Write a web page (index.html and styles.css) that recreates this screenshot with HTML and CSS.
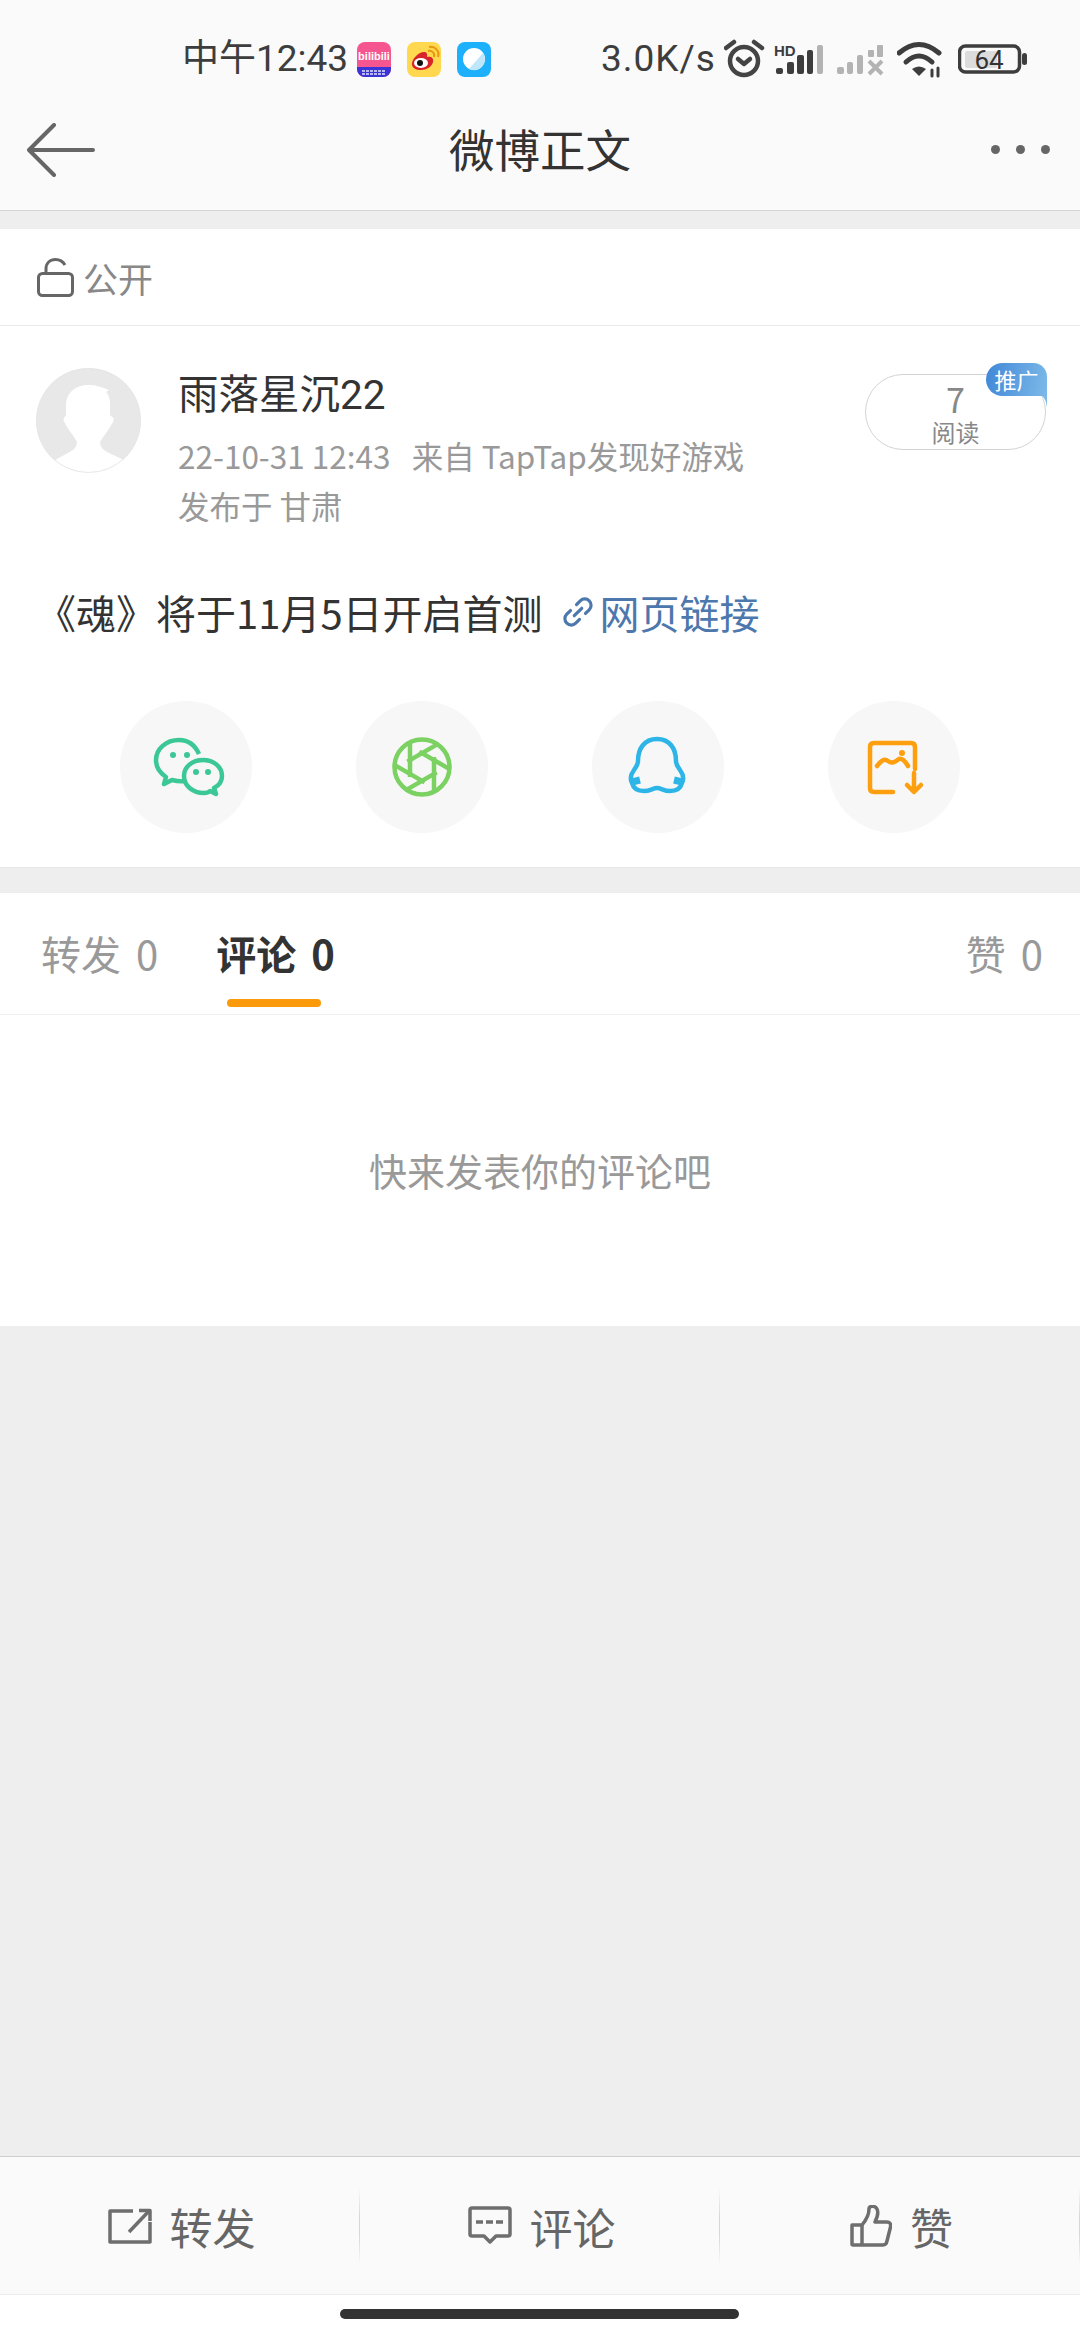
FILE: index.html
```html
<!DOCTYPE html>
<html lang="zh-CN">
<head>
    <meta charset="UTF-8">
    <meta name="viewport" content="width=device-width, initial-scale=1.0">
    <title>微博正文</title>
    <link rel="stylesheet" href="styles.css">
</head>
<body>
    <div class="page">
        <header class="top">
            <div class="status">
                <span class="time">中午12:43</span>
                <div class="apps">
                    <svg class="app" viewBox="0 0 34 35">
                        <rect width="34" height="35" rx="8" fill="#f5568f"/>
                        <path d="M0 25H34V27A8 8 0 0 1 26 35H8A8 8 0 0 1 0 27Z" fill="#3a33d6"/>
                        <text class="app-text" x="17" y="18" text-anchor="middle">bilibili</text>
                        <path d="M5 29H29M5 32H29" stroke="#b9b6f5" stroke-width="2" stroke-dasharray="3 1"/>
                    </svg>
                    <svg class="app" viewBox="0 0 34 35">
                        <rect width="34" height="35" rx="8" fill="#ffd84f"/>
                        <path d="M5 22C5 16 13 9 18 10C21 11 20 14 20 15C24 14 27 16 26 20C25 25 19 28 14 28C9 28 5 26 5 22Z" fill="#d8232a"/>
                        <ellipse cx="14" cy="21" rx="7" ry="5" fill="#fff"/>
                        <circle cx="13" cy="21" r="3" fill="#111"/>
                        <path d="M21 9C25 8 28 11 27 15M22 5C28 4 33 9 31 15" fill="none" stroke="#e8960e" stroke-width="2"/>
                    </svg>
                    <svg class="app" viewBox="0 0 34 35">
                        <rect width="34" height="35" rx="8" fill="#1fb0fb"/>
                        <circle cx="17" cy="17" r="11" fill="#fff"/>
                        <path d="M26 11A11 11 0 0 1 12 27Z" fill="#bfe6fb"/>
                    </svg>
                </div>
                <div class="sys">
                    <span class="speed">3.0K/s</span>
                    <svg class="alarm" viewBox="0 0 41 40" fill="none" stroke="#444" stroke-width="4.5" stroke-linecap="round" stroke-linejoin="round">
                        <circle cx="20" cy="22" r="14"/>
                        <path d="M2 9L10 3M38 9L30 3"/>
                        <path d="M14 20L20 25L26 20"/>
                    </svg>
                    <svg class="hd" viewBox="0 0 55 40">
                        <text class="hd-text" x="1" y="17">HD</text>
                        <rect x="3" y="29" width="7" height="6" rx="2" fill="#3d3d3d"/>
                        <rect x="14" y="23" width="7" height="12" rx="2" fill="#3d3d3d"/>
                        <rect x="24" y="16" width="7" height="19" rx="2" fill="#3d3d3d"/>
                        <rect x="34" y="11" width="6" height="24" rx="2" fill="#3d3d3d"/>
                        <rect x="44" y="6" width="6" height="29" rx="2" fill="#b3b3b3"/>
                    </svg>
                    <svg class="sig" viewBox="0 0 53 40" fill="#b3b3b3">
                        <rect x="1" y="28" width="7" height="7" rx="2"/>
                        <rect x="11" y="23" width="6" height="12" rx="2"/>
                        <rect x="21" y="16" width="6" height="19" rx="2"/>
                        <rect x="32" y="11" width="6" height="7" rx="1"/>
                        <rect x="41" y="6" width="6" height="12" rx="1"/>
                        <path d="M33 22L46 35M46 22L33 35" stroke="#b3b3b3" stroke-width="4" fill="none"/>
                    </svg>
                    <svg class="wifi" viewBox="0 0 53 40" fill="none" stroke="#3d3d3d" stroke-linecap="round">
                        <path d="M2 14Q22 -3 42 14" stroke-width="5"/>
                        <path d="M9 23Q22 11 35 23" stroke-width="5"/>
                        <path d="M15 30Q22 25 29 30L22 37Z" fill="#3d3d3d" stroke="none"/>
                        <path d="M35 31V37M41 29V37" stroke-width="3"/>
                    </svg>
                    <svg class="batt" viewBox="0 0 69 40">
                        <rect x="1.5" y="7" width="60" height="26" rx="6" fill="none" stroke="#3d3d3d" stroke-width="3.5"/>
                        <rect x="7" y="12" width="32" height="17" rx="2" fill="#dcdcdc"/>
                        <rect x="64" y="14" width="5" height="12" rx="2.5" fill="#3d3d3d"/>
                        <text class="batt-text" x="31" y="30" text-anchor="middle">64</text>
                    </svg>
                </div>
            </div>
            <div class="navbar">
                <svg class="back" viewBox="0 0 68 54" fill="none" stroke="#666" stroke-width="4" stroke-linecap="round" stroke-linejoin="round">
                    <path d="M27 2L2 27L27 52M2 27H66"/>
                </svg>
                <h1 class="title">微博正文</h1>
                <div class="dots"><i></i><i></i><i></i></div>
            </div>
        </header>

        <section class="card post">
            <div class="scope">
                <svg class="lock" viewBox="0 0 37 39" fill="none" stroke="#666" stroke-width="3">
                    <rect x="1.5" y="15.5" width="34" height="22" rx="4"/>
                    <path d="M9 15V11C9 5 13 1.5 18.5 1.5C23 1.5 26 3.5 28 7"/>
                </svg>
                <span>公开</span>
            </div>
            <div class="author">
                <svg class="avatar" viewBox="0 0 105 105">
                    <rect width="105" height="105" fill="#e8e8e8"/>
                    <path d="M53 17C40 17 30 24 30 38L30 48C27 49 27 53 29 55C32 62 37 66 41 74C41 80 36 83 30 86L19 92L19 105L88 105L88 92L75 86C69 83 64 80 64 74C68 67 73 62 77 54C78 52 78 49 76 49L74 47L74 36C74 30 72 26 70 24L73 22C66 19 60 17 53 17Z" fill="#fff"/>
                    <circle cx="52.5" cy="52.5" r="52" fill="none" stroke="#e6e6e6"/>
                </svg>
                <div class="info">
                    <div class="name">雨落星沉22</div>
                    <div class="meta">
                        <div>22-10-31 12:43&nbsp;&nbsp;&nbsp;来自 TapTap发现好游戏</div>
                        <div>发布于 甘肃</div>
                    </div>
                </div>
                <div class="reads">
                    <span class="reads-num">7</span>
                    <span class="reads-label">阅读</span>
                    <span class="promo">推广</span>
                </div>
            </div>
            <p class="content">《魂》将于11月5日开启首测
                <a class="link" href="#">
                    <svg class="link-icon" viewBox="0 0 34 34" fill="none" stroke="#4d78ad" stroke-width="3" stroke-linecap="round">
                        <g transform="rotate(-45 17 17)">
                            <path d="M13 11H8A6 6 0 0 0 8 23H13"/>
                            <path d="M21 11H26A6 6 0 0 1 26 23H21"/>
                            <path d="M12 17H22"/>
                        </g>
                    </svg>网页链接</a>
            </p>
            <div class="share">
                <div class="share-btn">
                    <svg viewBox="0 0 132 132" fill="none" stroke="#3cc797" stroke-width="4.5" stroke-linejoin="round">
                        <path d="M79 53C75 44 68 39 59 39C46 39 36 48 36 59C36 66 40 72 46 76L44 83L52 79C56 80 60 81 64 80"/>
                        <path d="M83 59C72 59 64 66 64 75C64 85 73 92 84 92C87 92 89 91 90 90L96 93L94 87C100 84 102 79 102 75C102 66 94 59 83 59Z"/>
                        <g fill="#3cc797" stroke="none">
                            <circle cx="53" cy="54" r="3"/>
                            <circle cx="67" cy="54" r="3"/>
                            <circle cx="76" cy="71" r="3"/>
                            <circle cx="88" cy="71" r="3"/>
                        </g>
                    </svg>
                </div>
                <div class="share-btn">
                    <svg viewBox="0 0 132 132" fill="none" stroke="#7bd161" stroke-width="4.5">
                        <circle cx="66" cy="66" r="27.5"/>
                        <g>
                            <path d="M78 56V92"/>
                            <path d="M78 56V92" transform="rotate(60 66 66)"/>
                            <path d="M78 56V92" transform="rotate(120 66 66)"/>
                            <path d="M78 56V92" transform="rotate(180 66 66)"/>
                            <path d="M78 56V92" transform="rotate(240 66 66)"/>
                            <path d="M78 56V92" transform="rotate(300 66 66)"/>
                        </g>
                    </svg>
                </div>
                <div class="share-btn">
                    <svg viewBox="0 0 132 132" fill="none" stroke="#2db5e8" stroke-width="4.5" stroke-linejoin="round">
                        <path d="M65 38C52 38 46 48 46 60C46 64 44 66 42 69C39 73 38 78 40 82C41 86 44 90 52 90C58 90 61 87 65 87C69 87 72 90 78 90C86 90 89 86 90 82C92 78 91 73 88 69C86 66 84 64 84 60C84 48 78 38 65 38Z"/>
                        <path d="M40 81L48 79M90 81L82 79" stroke-width="7"/>
                    </svg>
                </div>
                <div class="share-btn">
                    <svg viewBox="0 0 132 132" fill="none" stroke="#fd9f0e" stroke-width="4.5" stroke-linecap="round" stroke-linejoin="round">
                        <path d="M87 68V46Q87 42 83 42H46Q42 42 42 46V87Q42 91 46 91H65"/>
                        <path d="M49 65C53 60 56 57 60 60C64 63 67 61 71 58C74 57 77 60 80 65"/>
                        <circle cx="74" cy="52" r="3" fill="#fd9f0e" stroke="none"/>
                        <path d="M86 72V90M79 84L86 91L93 84"/>
                    </svg>
                </div>
            </div>
        </section>

        <section class="card tabs-card">
            <div class="tabs">
                <span class="tab">转发 0</span>
                <span class="tab active">评论 0</span>
                <span class="tab right">赞 0</span>
            </div>
            <div class="empty">快来发表你的评论吧</div>
        </section>

        <div class="spacer"></div>

        <footer class="bottom">
            <div class="action">
                <svg class="icon-share" viewBox="0 0 44 36" fill="none" stroke="#6e6e6e" stroke-width="3.5" stroke-linejoin="round">
                    <path d="M25 3H2V34H42V14"/>
                    <path d="M21 24L41 3"/>
                    <path d="M31 2.5H42V13"/>
                </svg>
                <span>转发</span>
            </div>
            <div class="action">
                <svg class="icon-comment" viewBox="0 0 44 39" fill="none" stroke="#6e6e6e" stroke-width="3.5" stroke-linejoin="round">
                    <path d="M4 2H40Q42 2 42 4V28Q42 30 40 30H28L22 36L16 30H4Q2 30 2 28V4Q2 2 4 2Z"/>
                    <path d="M8 16H36" stroke-dasharray="7 3"/>
                </svg>
                <span>评论</span>
            </div>
            <div class="action">
                <svg class="icon-like" viewBox="0 0 42 42" fill="none" stroke="#6e6e6e" stroke-width="3.5" stroke-linejoin="round">
                    <path d="M2 20H12C17 14 19 9 19 4C19 1 25 0 27 4C29 8 27 13 25 17H37C40 17 41 19 40.5 22L37 36C36.5 39 35 40 33 40H3Q2 40 2 39Z"/>
                    <path d="M12 20V40"/>
                </svg>
                <span>赞</span>
            </div>
        </footer>
        <div class="home"><div class="home-bar"></div></div>
    </div>
</body>
</html>
```
FILE: styles.css
```css
* {
    box-sizing: border-box;
}
body {
    margin: 0;
    font-family: "Noto Sans CJK SC", "Noto Sans", sans-serif;
    background-color: #eeeeee;
    color: #333;
}
.page {
    width: 1080px;
    height: 2340px;
    display: flex;
    flex-direction: column;
    overflow: hidden;
}

/* header */
.top {
    height: 211px;
    background-color: #fafafa;
    border-bottom: 1px solid #d4d4d4;
}
.status {
    height: 118px;
    display: flex;
    align-items: center;
    padding-left: 182px;
}
.time {
    font-family: Roboto, "Noto Sans CJK SC", sans-serif;
    font-size: 37px;
    line-height: 40px;
    color: #3d3d3d;
}
.apps {
    display: flex;
    gap: 16px;
    margin-left: 9px;
}
.app {
    width: 34px;
    height: 35px;
}
.app-text {
    font-family: "Liberation Sans", sans-serif;
    font-size: 11px;
    font-weight: bold;
    fill: #fff;
}
.sys {
    display: flex;
    align-items: center;
    gap: 8px;
    position: absolute;
    left: 601px;
    top: 39px;
}
.speed {
    font-family: Roboto, sans-serif;
    font-size: 37px;
    line-height: 40px;
    color: #3d3d3d;
    width: 115px;
    letter-spacing: 1px;
    white-space: nowrap;
}
.sys svg {
    height: 40px;
}
.alarm {
    width: 41px;
}
.hd {
    width: 55px;
}
.sig, .wifi {
    width: 53px;
}
.batt {
    width: 69px;
}
.hd-text {
    font-family: "Liberation Sans", sans-serif;
    font-size: 15px;
    font-weight: bold;
    fill: #3d3d3d;
}
.batt-text {
    font-family: Roboto, sans-serif;
    font-size: 26px;
    fill: #333;
}
.navbar {
    height: 92px;
    position: relative;
    display: flex;
    align-items: center;
    justify-content: center;
}
.back {
    position: absolute;
    left: 27px;
    top: 5px;
    width: 68px;
    height: 54px;
}
.title {
    margin: 0 0 32px;
    font-size: 45.5px;
    font-weight: 400;
    line-height: 60px;
    color: #333;
}
.dots {
    position: absolute;
    right: 30px;
    top: 27px;
    display: flex;
    gap: 16px;
}
.dots i {
    width: 9px;
    height: 9px;
    border-radius: 50%;
    background-color: #666;
}

/* post card */
.card {
    background-color: #fff;
}
.post {
    margin-top: 18px;
    height: 639px;
    border-bottom: 1px solid #e6e6e6;
}
.scope {
    height: 97px;
    display: flex;
    align-items: center;
    gap: 9px;
    padding-left: 37px;
    border-bottom: 1px solid #ececec;
    font-size: 35px;
    color: #888;
}
.lock {
    width: 37px;
    height: 39px;
}
.author {
    display: flex;
    align-items: flex-start;
    padding: 42px 34px 0 36px;
}
.avatar {
    width: 105px;
    height: 105px;
    border-radius: 50%;
    flex-shrink: 0;
}
.info {
    margin-left: 37px;
}
.name {
    font-family: Roboto, "Noto Sans CJK SC", sans-serif;
    font-size: 40.5px;
    line-height: 54px;
    color: #333;
}
.meta {
    margin-top: 8px;
    font-size: 31.5px;
    line-height: 50px;
    color: #999;
    white-space: nowrap;
}
.reads {
    margin-left: auto;
    margin-top: 6px;
    width: 181px;
    height: 76px;
    border: 1px solid #d4d4d4;
    border-radius: 38px;
    position: relative;
    display: flex;
    flex-direction: column;
    align-items: center;
}
.reads-num {
    font-size: 34px;
    line-height: 32px;
    margin-top: 8px;
    color: #888;
}
.reads-label {
    font-size: 24px;
    line-height: 28px;
    margin-top: 3px;
    color: #888;
}
.promo {
    position: absolute;
    right: -2px;
    top: -12px;
    width: 61px;
    height: 33px;
    border-radius: 17px 14px 0 17px;
    background: linear-gradient(100deg, #3f87d8, #7db9e8);
    color: #fff;
    font-size: 22px;
    line-height: 32px;
    text-align: center;
}
.promo::after {
    content: "";
    position: absolute;
    right: 0;
    top: 100%;
    width: 14px;
    height: 10px;
    background: radial-gradient(circle at 0 100%, transparent 13px, #7db9e8 14px);
}
.content {
    margin: 52px 0 0;
    padding-left: 36px;
    font-size: 40px;
    line-height: 60px;
    color: #333;
    display: flex;
    align-items: center;
}
.link {
    display: inline-flex;
    align-items: center;
    gap: 4px;
    margin-left: 17px;
    color: #4d78ad;
    text-decoration: none;
}
.link-icon {
    width: 36px;
    height: 36px;
}
.share {
    margin-top: 59px;
    display: flex;
    justify-content: center;
    gap: 104px;
}
.share-btn {
    width: 132px;
    height: 132px;
    border-radius: 50%;
    background-color: #f7f7f7;
}
.share-btn svg {
    display: block;
    width: 132px;
    height: 132px;
}

/* tabs */
.tabs-card {
    margin-top: 25px;
}
.tabs {
    height: 122px;
    display: flex;
    gap: 58px;
    padding: 0 37px 0 41px;
    border-bottom: 1px solid #eeeeee;
}
.tab {
    position: relative;
    font-size: 40px;
    line-height: 120px;
    word-spacing: 6px;
    color: #999;
}
.tab.active {
    color: #333;
    font-weight: 700;
}
.tab.active::after {
    content: "";
    position: absolute;
    left: 11px;
    bottom: 7px;
    width: 94px;
    height: 8px;
    border-radius: 4px;
    background-color: #fb9a0a;
}
.tab.right {
    margin-left: auto;
}
.empty {
    height: 311px;
    display: flex;
    align-items: center;
    justify-content: center;
    padding-bottom: 2px;
    font-size: 38px;
    color: #999;
}
.spacer {
    flex: 1;
}

/* bottom bar */
.bottom {
    height: 139px;
    background-color: #fafafa;
    border-top: 1px solid #cfcfcf;
    border-bottom: 1px solid #ececec;
    display: flex;
}
.action {
    flex: 1;
    display: flex;
    align-items: center;
    justify-content: center;
    gap: 18px;
    padding-left: 3px;
    font-size: 43px;
    color: #666;
    position: relative;
}
.action::after {
    content: "";
    position: absolute;
    right: 0;
    top: 30px;
    width: 1px;
    height: 78px;
    background: linear-gradient(to bottom, #fafafa, #d6d6d6 40%, #d6d6d6 60%, #fafafa);
}
.icon-share {
    width: 44px;
    height: 36px;
}
.icon-comment {
    width: 44px;
    height: 39px;
}
.icon-like {
    width: 42px;
    height: 42px;
}
.home {
    height: 45px;
    background-color: #fff;
    padding-top: 14px;
}
.home-bar {
    width: 399px;
    height: 10px;
    margin-left: 340px;
    border-radius: 5px;
    background-color: #333;
}
```
